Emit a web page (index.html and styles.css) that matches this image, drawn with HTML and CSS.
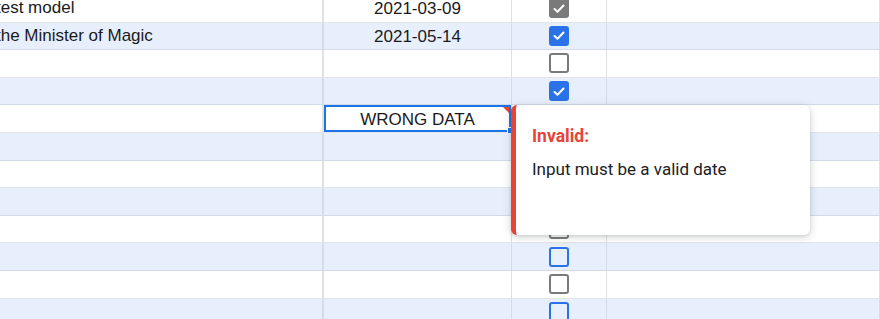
FILE: index.html
```html
<!DOCTYPE html>
<html lang="en">
<head>
  <meta charset="UTF-8" />
  <title>Sheet validation</title>
  <link rel="stylesheet" href="styles.css">
</head>
<body>
  <div class="viewport">
    <div class="sheet">
      <div class="row">
        <div class="cell name">test model</div>
        <div class="cell date">2021-03-09</div>
        <div class="cell check"><span class="box checked"><svg viewBox="0 0 16 16"><polyline points="3.5,8.5 6.5,11.2 12.5,5"/></svg></span></div>
        <div class="cell"></div>
      </div>
      <div class="row alt">
        <div class="cell name">the Minister of Magic</div>
        <div class="cell date">2021-05-14</div>
        <div class="cell check"><span class="box checked"><svg viewBox="0 0 16 16"><polyline points="3.5,8.5 6.5,11.2 12.5,5"/></svg></span></div>
        <div class="cell"></div>
      </div>
      <div class="row">
        <div class="cell name"></div>
        <div class="cell date"></div>
        <div class="cell check"><span class="box"></span></div>
        <div class="cell"></div>
      </div>
      <div class="row alt">
        <div class="cell name"></div>
        <div class="cell date"></div>
        <div class="cell check"><span class="box checked"><svg viewBox="0 0 16 16"><polyline points="3.5,8.5 6.5,11.2 12.5,5"/></svg></span></div>
        <div class="cell"></div>
      </div>
      <div class="row">
        <div class="cell name"></div>
        <div class="cell date selected">WRONG DATA<span class="flag"></span><span class="handle"></span></div>
        <div class="cell check"><span class="box"></span></div>
        <div class="cell"></div>
      </div>
      <div class="row alt">
        <div class="cell name"></div>
        <div class="cell date"></div>
        <div class="cell check"><span class="box"></span></div>
        <div class="cell"></div>
      </div>
      <div class="row">
        <div class="cell name"></div>
        <div class="cell date"></div>
        <div class="cell check"><span class="box"></span></div>
        <div class="cell"></div>
      </div>
      <div class="row alt">
        <div class="cell name"></div>
        <div class="cell date"></div>
        <div class="cell check"><span class="box"></span></div>
        <div class="cell"></div>
      </div>
      <div class="row">
        <div class="cell name"></div>
        <div class="cell date"></div>
        <div class="cell check"><span class="box"></span></div>
        <div class="cell"></div>
      </div>
      <div class="row alt">
        <div class="cell name"></div>
        <div class="cell date"></div>
        <div class="cell check"><span class="box"></span></div>
        <div class="cell"></div>
      </div>
      <div class="row">
        <div class="cell name"></div>
        <div class="cell date"></div>
        <div class="cell check"><span class="box"></span></div>
        <div class="cell"></div>
      </div>
      <div class="row alt">
        <div class="cell name"></div>
        <div class="cell date"></div>
        <div class="cell check"><span class="box"></span></div>
        <div class="cell"></div>
      </div>
    </div>

    <div class="tooltip">
      <div class="tooltip-title">Invalid:</div>
      <div class="tooltip-text">Input must be a valid date</div>
    </div>
  </div>
</body>
</html>
```

FILE: styles.css
```css
/* Reset */
* {
  margin: 0;
  padding: 0;
  box-sizing: border-box;
}

body {
  font-family: 'Liberation Sans', Arial, sans-serif;
  background: #fff;
  color: #1a1a1a;
  overflow: hidden;
}

.viewport {
  position: relative;
  width: 880px;
  height: 319px;
  overflow: hidden;
}

/* Grid of rows, scrolled a little */
.sheet {
  margin-top: -5px;
  margin-left: -7px;
}

.row {
  display: grid;
  grid-template-columns: 331px 188px 95px 1fr;
  height: 27.6px;
  background: #fff;
  border-bottom: 1px solid #e2e4e8;
}

.row.alt {
  background: #e7effd;
  border-bottom-color: #d3dbe8;
}

.cell {
  display: flex;
  align-items: center;
  font-size: 17px;
  white-space: nowrap;
  overflow: hidden;
  border-right: 1px solid #e0e0e0;
}

.row.alt .cell {
  border-right-color: #d4dcea;
}

.cell.name {
  padding-left: 3px;
  border-right-width: 2px;
}

.cell.date {
  justify-content: center;
  padding-top: 2px;
}

.cell.check {
  justify-content: center;
}

/* Checkboxes */
.box {
  width: 20px;
  height: 20px;
  border: 2px solid #7a7a7a;
  border-radius: 3px;
  display: flex;
  align-items: center;
  justify-content: center;
}

.row.alt .box {
  border-color: #2a72e8;
}

.box.checked {
  background: #7a7a7a;
}

.row.alt .box.checked {
  background: #2a72e8;
}

.box svg {
  width: 17px;
  height: 17px;
  fill: none;
  stroke: #fff;
  stroke-width: 2;
  stroke-linecap: round;
  stroke-linejoin: round;
}

/* Selected cell with bad data */
.cell.selected {
  position: relative;
  overflow: visible;
  background: #fff;
  box-shadow: inset 0 0 0 2px #1a73e8;
}

.flag {
  position: absolute;
  top: 2px;
  right: 2px;
  width: 0;
  height: 0;
  border-top: 6px solid #ea4335;
  border-left: 6px solid transparent;
}

.handle {
  position: absolute;
  right: -2px;
  bottom: -1px;
  width: 6px;
  height: 6px;
  background: #1a73e8;
  border: 1px solid #fff;
  border-right: none;
  border-bottom: none;
}

/* Validation popup */
.tooltip {
  position: absolute;
  left: 511px;
  top: 105px;
  width: 299px;
  height: 130px;
  background: #fff;
  border-left: 5px solid #ea4335;
  border-radius: 6px;
  box-shadow: 0 2px 8px rgba(60, 64, 67, 0.22), 0 1px 3px rgba(60, 64, 67, 0.12);
  padding: 20px 16px;
  font-family: Roboto, 'Noto Sans', sans-serif;
}

.tooltip-title {
  color: #ea4335;
  font-weight: 700;
  font-size: 17.5px;
  line-height: 22px;
}

.tooltip-text {
  margin-top: 11px;
  font-size: 17px;
  line-height: 22px;
  color: #202124;
}
```
